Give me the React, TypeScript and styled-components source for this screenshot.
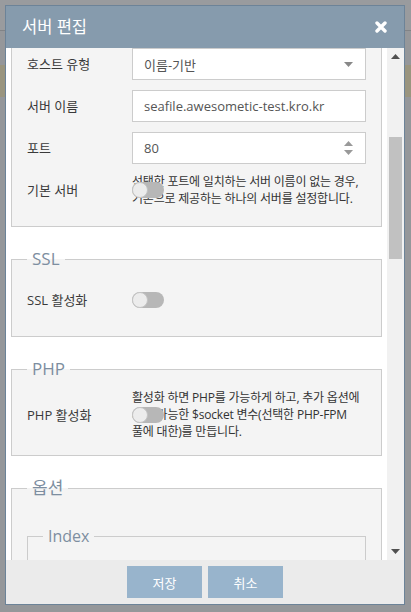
import { useLayoutEffect, useRef } from "react";
import styled, { createGlobalStyle } from "styled-components";

const GlobalStyle = createGlobalStyle`
  html, body {
    margin: 0;
    padding: 0;
  }
  body {
    font-family: "Open Sans", "Noto Sans CJK KR", sans-serif;
    background: #95979a;
  }
`;

const Page = styled.div`
  position: relative;
  width: 411px;
  height: 612px;
  overflow: hidden;
  background: #95979a;
`;

const NavBar = styled.div`
  height: 30px;
  background: #999b9e;
  border-bottom: 1px solid #818386;
`;

const Banner = styled.div`
  margin-top: 34px;
  height: 32px;
  background: #9a957f;
`;

const Modal = styled.div`
  position: absolute;
  left: 5px;
  top: 5px;
  width: 400px;
  height: 600px;
  box-sizing: border-box;
  border: 1px solid #6c8398;
  background: #fff;
  display: flex;
  flex-direction: column;
`;

const Header = styled.div`
  height: 42px;
  flex: none;
  background: #869bad;
  display: flex;
  align-items: center;
  justify-content: space-between;
  padding: 0 17px 0 16px;
`;

const Title = styled.h4`
  margin: 0;
  font-size: 16.5px;
  font-weight: 400;
  color: #fff;
  line-height: 20px;
`;

const CloseButton = styled.button`
  border: 0;
  padding: 0;
  background: none;
  display: flex;
  cursor: pointer;
`;

const Body = styled.div`
  flex: 1;
  min-height: 0;
  display: flex;
`;

const Scroller = styled.div`
  flex: 1;
  overflow: hidden;
  padding: 10px 5px 40px;
  background: #fff;
`;

const ScrollBar = styled.div`
  width: 17px;
  flex: none;
  background: #f1f1f1;
  display: flex;
  flex-direction: column;
`;

const ScrollButton = styled.div`
  height: 17px;
  flex: none;
  display: flex;
  align-items: center;
  justify-content: center;
`;

const Track = styled.div`
  flex: 1;
  padding: 0 2px;
`;

const Thumb = styled.div`
  background: #c1c1c1;
  height: 122px;
`;

const Group = styled.fieldset<{ $inner?: boolean }>`
  margin: ${(p) => (p.$inner ? "18px 0 0" : "22px 0 0")};
  padding: 10px 15px 15px;
  border: 1px solid #ccc;
  background: #f4f4f4;
  min-width: 0;

  &:first-child {
    margin-top: 0;
  }
`;

const Legend = styled.legend<{ $size?: number }>`
  padding: 0 5px;
  font-size: ${(p) => p.$size ?? 17}px;
  line-height: 20px;
  color: #7d8ea0;
`;

const Row = styled.div`
  display: grid;
  grid-template-columns: 105px 234px;
  align-items: center;
  min-height: 42px;
`;

const Label = styled.label`
  font-size: 13px;
  color: #3a3a3a;
  line-height: 18px;
`;

const Field = styled.div`
  height: 32px;
  box-sizing: border-box;
  border: 1px solid #ccc;
  background: #fff;
  padding: 0 12px 0 11px;
  display: flex;
  align-items: center;
  justify-content: space-between;
  font-size: 13px;
  color: #555;
`;

const Spinner = styled.div`
  display: flex;
  flex-direction: column;
  gap: 4px;
`;

const ToggleCell = styled.div`
  display: grid;
  align-items: center;

  & > * {
    grid-area: 1 / 1;
  }
`;

const Help = styled.p`
  margin: 0;
  font-size: 12px;
  line-height: 17px;
  color: #333;
  white-space: nowrap;
  letter-spacing: -0.2px;
`;

const Switch = styled.span<{ $on?: boolean }>`
  position: relative;
  width: 32px;
  height: 16px;
  border-radius: 8px;
  background: ${(p) => (p.$on ? "#98b4cc" : "#b7b7b7")};
  align-self: center;

  &::before {
    content: "";
    position: absolute;
    top: 0;
    left: ${(p) => (p.$on ? "16px" : "0")};
    width: 16px;
    height: 16px;
    box-sizing: border-box;
    border-radius: 50%;
    border: 1px solid #c4c4c4;
    background: #ececec;
  }
`;

const Footer = styled.div`
  height: 44px;
  flex: none;
  background: #ebebeb;
  display: flex;
  align-items: center;
  justify-content: center;
  gap: 6px;
`;

const Button = styled.button`
  width: 75px;
  height: 32px;
  border: 0;
  background: #98b4cc;
  color: #fff;
  font-family: inherit;
  font-size: 13px;
  cursor: pointer;
`;

const Caret = ({ up, color = "#888" }: { up?: boolean; color?: string }) => (
  <svg width="9" height="5" viewBox="0 0 9 5">
    <path d={up ? "M0 5 L4.5 0 L9 5 Z" : "M0 0 L9 0 L4.5 5 Z"} fill={color} />
  </svg>
);

const Toggle = ({ on }: { on?: boolean }) => <Switch $on={on} />;

export default function App() {
  const scrollRef = useRef<HTMLDivElement>(null);
  const anchorRef = useRef<HTMLDivElement>(null);

  useLayoutEffect(() => {
    const box = scrollRef.current;
    const row = anchorRef.current;
    if (!box || !row) return;
    box.scrollTop = row.getBoundingClientRect().top - box.getBoundingClientRect().top + 5;
  }, []);

  return (
    <Page>
      <GlobalStyle />
      <NavBar />
      <Banner />
      <Modal>
        <Header>
          <Title>서버 편집</Title>
          <CloseButton aria-label="닫기">
            <svg width="12" height="12" viewBox="0 0 12 12">
              <path d="M2 2 L10 10 M10 2 L2 10" stroke="#fff" strokeWidth="3.4" strokeLinecap="round" />
            </svg>
          </CloseButton>
        </Header>
        <Body>
          <Scroller ref={scrollRef}>
            <Group>
              <Legend>일반</Legend>
              <Row>
                <Label>활성화</Label>
                <ToggleCell>
                  <Toggle on />
                </ToggleCell>
              </Row>
              <Row>
                <Label>리슨 주소</Label>
                <Field>*</Field>
              </Row>
              <Row ref={anchorRef}>
                <Label>호스트 유형</Label>
                <Field>
                  이름-기반
                  <Caret />
                </Field>
              </Row>
              <Row>
                <Label>서버 이름</Label>
                <Field>seafile.awesometic-test.kro.kr</Field>
              </Row>
              <Row>
                <Label>포트</Label>
                <Field>
                  80
                  <Spinner>
                    <Caret up color="#999" />
                    <Caret color="#999" />
                  </Spinner>
                </Field>
              </Row>
              <Row>
                <Label>기본 서버</Label>
                <ToggleCell>
                  <Help>
                    선택한 포트에 일치하는 서버 이름이 없는 경우,
                    <br />
                    기본으로 제공하는 하나의 서버를 설정합니다.
                  </Help>
                  <Toggle />
                </ToggleCell>
              </Row>
            </Group>

            <Group>
              <Legend>SSL</Legend>
              <Row>
                <Label>SSL 활성화</Label>
                <ToggleCell>
                  <Toggle />
                </ToggleCell>
              </Row>
            </Group>

            <Group>
              <Legend>PHP</Legend>
              <Row>
                <Label>PHP 활성화</Label>
                <ToggleCell>
                  <Help>
                    활성화 하면 PHP를 가능하게 하고, 추가 옵션에
                    <br />
                    사용 가능한 $socket 변수(선택한 PHP-FPM
                    <br />
                    풀에 대한)를 만듭니다.
                  </Help>
                  <Toggle />
                </ToggleCell>
              </Row>
            </Group>

            <Group>
              <Legend>옵션</Legend>
              <Group $inner>
                <Legend $size={16}>Index</Legend>
                <Row>
                  <Label>인덱스 파일</Label>
                  <Field>index.html index.htm index.php</Field>
                </Row>
                <Row>
                  <Label>자동 인덱스</Label>
                  <ToggleCell>
                    <Toggle />
                  </ToggleCell>
                </Row>
              </Group>
            </Group>
          </Scroller>
          <ScrollBar>
            <ScrollButton>
              <Caret up color="#505050" />
            </ScrollButton>
            <Track>
              <Thumb style={{ marginTop: 72 }} />
            </Track>
            <ScrollButton>
              <Caret color="#505050" />
            </ScrollButton>
          </ScrollBar>
        </Body>
        <Footer>
          <Button>저장</Button>
          <Button>취소</Button>
        </Footer>
      </Modal>
    </Page>
  );
}
